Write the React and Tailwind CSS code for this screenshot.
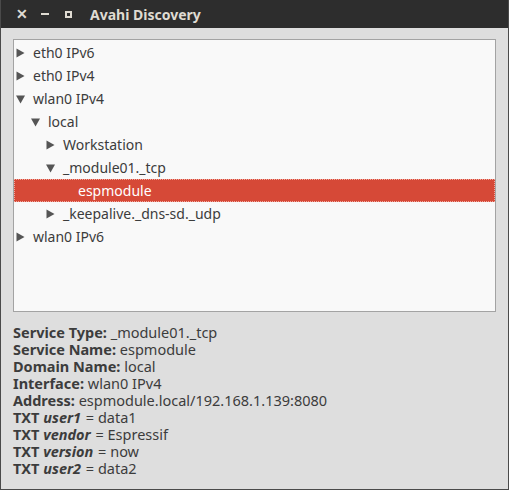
import React from "react";

const rows = [
  { label: "eth0 IPv6", level: 0, arrow: "right" },
  { label: "eth0 IPv4", level: 0, arrow: "right" },
  { label: "wlan0 IPv4", level: 0, arrow: "down" },
  { label: "local", level: 1, arrow: "down" },
  { label: "Workstation", level: 2, arrow: "right" },
  { label: "_module01._tcp", level: 2, arrow: "down" },
  { label: "espmodule", level: 3, arrow: null, selected: true },
  { label: "_keepalive._dns-sd._udp", level: 2, arrow: "right" },
  { label: "wlan0 IPv6", level: 0, arrow: "right" },
];

const indents = ["pl-[2px]", "pl-[17px]", "pl-[32px]", "pl-[47px]"];

function Arrow({ dir }) {
  return (
    <svg width="9" height="10" viewBox="0 0 9 10" className="shrink-0">
      {dir === "right" ? <polygon points="0.5,0.5 8.5,5 0.5,9.5" fill="#555555" /> : <polygon points="0,1.5 9,1.5 4.5,9.5" fill="#555555" />}
    </svg>
  );
}

function TreeRow({ row }) {
  return (
    <div
      className={`flex items-center h-[23px] gap-[8px] ${indents[row.level]} ${
        row.selected ? "bg-[#d64937] text-white outline-1 outline-dotted outline-[#f2a89e] -outline-offset-1" : "text-[#3c3c3c]"
      }`}
    >
      {row.arrow ? <Arrow dir={row.arrow} /> : <span className="w-[9px] shrink-0" />}
      <span>{row.label}</span>
    </div>
  );
}

function Detail({ label, value }) {
  return (
    <div>
      <span className="font-bold">{label}</span> {value}
    </div>
  );
}

function Txt({ k, v }) {
  return (
    <div>
      <span className="font-bold">TXT</span> <span className="font-bold italic pr-[1px]">{k}</span> = {v}
    </div>
  );
}

export default function App() {
  return (
    <div
      className="w-[509px] h-[490px] flex flex-col bg-[#dedede] border-x border-b border-[#4a4a4a]"
      style={{ fontFamily: '"Noto Sans", "Open Sans", sans-serif' }}
    >
      <div className="h-[28px] shrink-0 bg-[#2d2d2d] flex items-center pl-[15px] text-[#dfdbd2]">
        <span className="text-[14px] font-bold w-[25px] leading-none">✕</span>
        <span className="w-[24px] flex"><span className="block w-[8px] h-[2px] bg-[#dfdbd2]" /></span>
        <span className="w-[25px] flex"><span className="block w-[7px] h-[7px] border-2 border-[#dfdbd2]" /></span>
        <span className="text-[14px] font-bold">Avahi Discovery</span>
      </div>
      <div className="px-[12px] pt-[11px]">
        <div className="h-[273px] border border-[#a3a3a3] bg-[#f9f9f9] text-[14px] flex flex-col pt-[1px]">
          {rows.map((r) => (
            <TreeRow key={r.label} row={r} />
          ))}
        </div>
      </div>
      <div className="px-[12px] pt-[12px] text-[14.5px] leading-[17px] text-[#3c3c3c]">
        <Detail label="Service Type:" value="_module01._tcp" />
        <Detail label="Service Name:" value="espmodule" />
        <Detail label="Domain Name:" value="local" />
        <Detail label="Interface:" value="wlan0 IPv4" />
        <Detail label="Address:" value="espmodule.local/192.168.1.139:8080" />
        <Txt k="user1" v="data1" />
        <Txt k="vendor" v="Espressif" />
        <Txt k="version" v="now" />
        <Txt k="user2" v="data2" />
      </div>
    </div>
  );
}
